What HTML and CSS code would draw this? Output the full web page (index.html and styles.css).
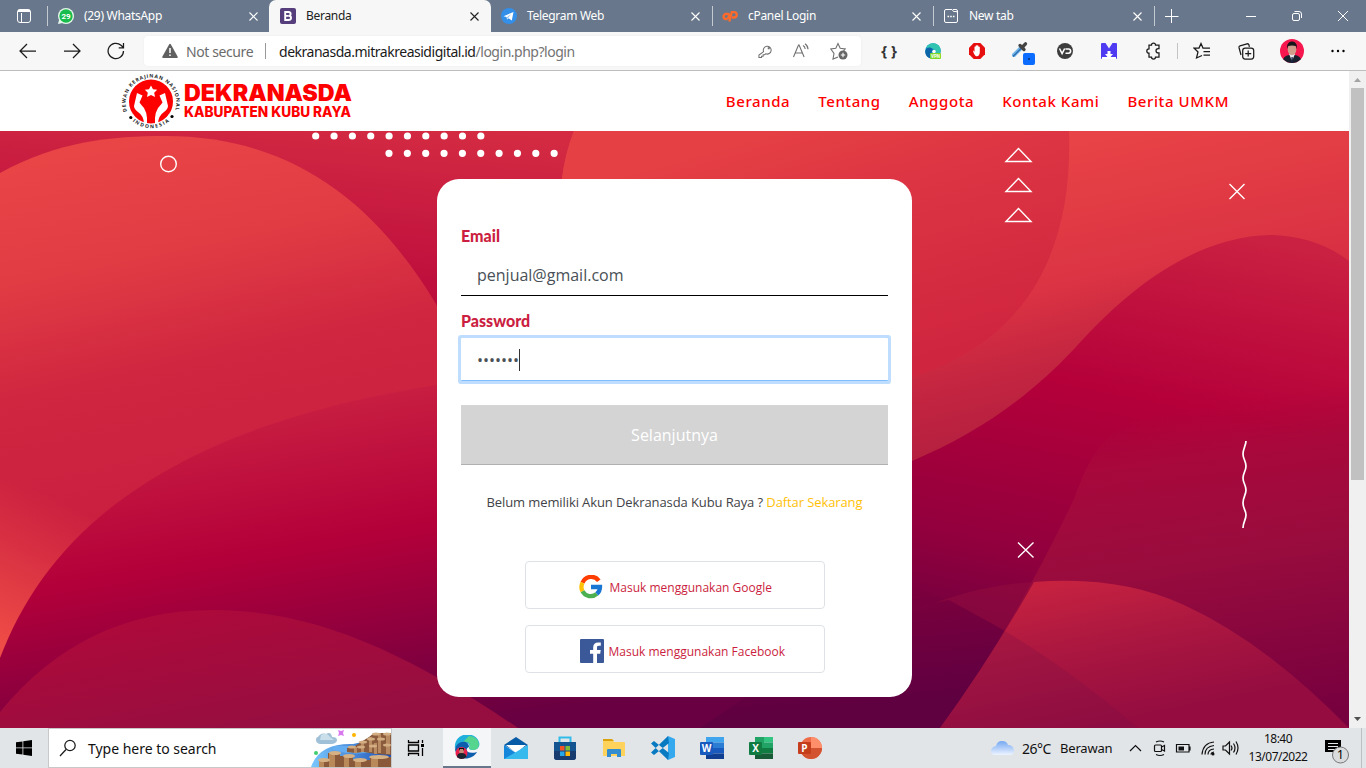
FILE: index.html
```html
<!DOCTYPE html>
<html lang="id">
<head>
<meta charset="utf-8">
<title>Beranda</title>
<link rel="stylesheet" href="styles.css">
</head>
<body>
<div class="screen">
  <header class="tabs">
    <div class="tab-menu"><svg width="16" height="16" viewBox="0 0 16 16" fill="none" stroke="#fff"><rect x="1.5" y="1.5" width="13" height="13" rx="2.5"/><path d="M2 3.5h12M5.5 5v9" /><path d="M2 2.7h12" stroke-width="2"/></svg></div>
    <div class="tab"><svg class="fav" viewBox="0 0 16 16"><circle cx="8" cy="8" r="8" fill="#e8f8ec"/><path d="M0 16l1.200-4.500L4.500 15z" fill="#e8f8ec"/><circle cx="8" cy="8" r="6.700" fill="#19bd4d"/><text class="badge-num" x="8" y="10.700" text-anchor="middle" fill="#fff">29</text></svg><span class="title">(29) WhatsApp</span><svg class="x" viewBox="0 0 9 9"><path d="M.5.5l8 8m0-8l-8 8"/></svg></div>
    <div class="tab active"><svg class="fav" viewBox="0 0 16 16"><rect width="16" height="16" rx="2" fill="#563d7c"/><path d="M5.200 4h3.300c2.800 0 2.800 3.700.2 3.800 3.200.2 3.100 4.200-.2 4.200H5.200zM5.200 7.900h3.300" fill="none" stroke="#fff" stroke-width="1.900"/></svg><span class="title">Beranda</span><svg class="x" viewBox="0 0 9 9"><path d="M.5.5l8 8m0-8l-8 8"/></svg></div>
    <div class="tab"><svg class="fav" viewBox="0 0 16 16"><circle cx="8" cy="8" r="8" fill="#338fe8"/><path d="M2.500 8.200L12.500 4l-1.700 8.500-3.200-2.300-1.500 1.400-.6-2.500z" fill="#fff"/><path d="M5.800 9.200l4.500-3.300-3 3.900-.9 1.100" fill="#9bc9f4"/></svg><span class="title">Telegram Web</span><svg class="x" viewBox="0 0 9 9"><path d="M.5.5l8 8m0-8l-8 8"/></svg></div>
    <div class="tab line"><svg class="fav" viewBox="0 0 16 16" fill="none" stroke="#ff6a2b" stroke-width="2.300"><path d="M7.500 6H4a2.500 2.500 0 000 5h1.500M7.300 13.500L9.800 4.200h2.400c3.800 0 3.200 5.300-.4 5.300H10M7.500 6L6 11"/></svg><span class="title">cPanel Login</span><svg class="x" viewBox="0 0 9 9"><path d="M.5.5l8 8m0-8l-8 8"/></svg></div>
    <div class="tab line"><svg class="fav" viewBox="0 0 16 16" fill="none" stroke="#fff"><path d="M3 1.500h6l1.500 2H13a1.500 1.500 0 011.500 1.500v8a1.500 1.500 0 01-1.500 1.500H3A1.500 1.500 0 011.500 13V3A1.500 1.500 0 013 1.500zM10 1.500h3a1.500 1.500 0 011.500 1.500v2"/><path d="M4.500 8.500h1.600m1.100 0h1.600m1.100 0h1.600" stroke-width="1.500"/></svg><span class="title">New tab</span><svg class="x" viewBox="0 0 9 9"><path d="M.5.5l8 8m0-8l-8 8"/></svg></div>
    <div class="new line"><svg width="14" height="14" viewBox="0 0 14 14" stroke="#fff"><path d="M6.500 0v14M0 7.500h13.500"/></svg></div>
    <div class="win"><svg width="112" height="12" viewBox="0 0 112 12" fill="none" stroke="#fff"><path d="M9 6.500h10M101 1l10 10m0-10l-10 10"/><rect x="55.500" y="3.500" width="7" height="7" rx="1.500"/><path d="M57.500 1.500h4.500a2.500 2.500 0 012.500 2.500v4"/></svg></div>
  </header>

  <div class="toolbar">
    <div class="cell"><svg width="18" height="16" viewBox="0 0 18 16" class="ink"><path d="M17 8H1.500M8 1L1 8l7 7"/></svg></div>
    <div class="cell"><svg width="18" height="16" viewBox="0 0 18 16" class="ink"><path d="M1 8h15.500M10 1l7 7-7 7"/></svg></div>
    <div class="cell"><svg width="18" height="18" viewBox="0 0 18 18" class="ink"><path d="M16.500 9A7.700 7.700 0 1114 3.300L16.500 5.500M16.500 1v4.800h-4.800"/></svg></div>
    <div class="address">
      <svg width="16" height="16" viewBox="0 0 16 16"><path d="M7.200 1.300q.8-1.300 1.600 0L15.700 13.700q.4 1.300-.9 1.300H1.200Q-.1 15 .3 13.700z" fill="#606060"/><path d="M8 5v5M8 11.500V13" stroke="#fff" stroke-width="1.500"/></svg>
      <span class="unsafe">Not secure</span><i class="bar"></i>
      <span class="url">dekranasda.mitrakreasidigital.id<em>/login.php?login</em></span>
      <div class="addr-icons">
        <svg width="14" height="14" viewBox="0 0 15 15"><path d="M6 8.200a4.200 4.200 0 112.300 2.300L7 11.500H5.500v1.600H3.800v1.400H1v-2.600zM11 4h1v1h-1z"/></svg>
        <svg width="18" height="16" viewBox="0 0 18 16"><path d="M1.500 14L6.500 2h.6l5 12M3.500 10h6.700M11 2.500q2 1 2.200 3.500M13 .8q3 2 3 5.500"/></svg>
        <svg width="18" height="18" viewBox="0 0 18 18"><path d="M8 15l-5 2 1-5.500L.8 7l5-.8L8 1.500l2.200 4.700 5 .8-1.700 1.800"/><circle cx="13" cy="13" r="4.500" fill="#666" stroke="none"/><path d="M13 10.800v4.400M10.800 13h4.400" stroke="#fff"/></svg>
      </div>
    </div>
    <div class="ext">
      <div class="cell braces">{ }</div>
      <div class="cell"><svg width="16" height="16" viewBox="0 0 16 16"><circle cx="8" cy="8" r="7.800" fill="#1593c9"/><path d="M1 5C4-2 15-1 15.700 7c0 5-6 4-5.200 2 .4-2-3.500-5-9.500-4z" fill="#31c4b1"/><path d="M.3 8C2 3 8 4 8 8c-3 0-2 5 2 7C4 17 0 13 .3 8z" fill="#0c65a8"/><circle cx="9" cy="8.500" r="1.800" fill="#fff"/><rect x="5" y="10" width="11" height="6" rx="1" fill="#7cd727"/><text class="vpn" x="10.500" y="14.800" text-anchor="middle">VPN</text></svg></div>
      <div class="cell"><svg width="16" height="16" viewBox="0 0 16 16"><path d="M4.700 0h6.600L16 4.700v6.600L11.300 16H4.700L0 11.300V4.700z" fill="#e60e0e"/><path d="M4 7.500c1 .3 1.500 1.500 1.500 1.500V3.800h1V2.800h1V2h1v.8h1v1h1.300v5c0 2.700-1 4.500-3 4.500S4.500 10 4 7.500z" fill="#fff"/></svg></div>
      <div class="cell"><svg class="picker" width="24" height="24" viewBox="0 0 24 24"><path d="M5 16l7.500-7.500" stroke="#6fb3e8" stroke-width="4" stroke-linecap="round"/><path d="M4 17.500L13 8.500" stroke="#2867a9" stroke-width="1.200"/><path d="M11 6.500l4 4M13.500 8l3-3.200" stroke="#444" stroke-width="3.300" stroke-linecap="round"/><rect x="14" y="14" width="12" height="12" rx="2" fill="#0b6cff"/><path d="M19 20h2" stroke="#012"/></svg></div>
      <div class="cell"><svg width="16" height="16" viewBox="0 0 16 16"><circle cx="8" cy="8" r="8" fill="#3d3d3d"/><path d="M2.500 5.500l2.600 5 2.600-5M8.500 6h3a2.100 2.100 0 010 4.200h-3" fill="none" stroke="#fff" stroke-width="1.600"/></svg></div>
      <div class="cell"><svg width="16" height="16" viewBox="0 0 16 16"><path d="M0 1q0-1 1-1h3.500L8 5.500 11.500 0H15q1 0 1 1v14q0 1-1 1H1q-1 0-1-1z" fill="#4f3cf2"/><path d="M6.500 8h3v3H12l-2.500 3H15v2H1v-2h5.500L4 11h2.500z" fill="#fff"/></svg></div>
      <div class="cell"><svg width="18" height="18" viewBox="0 0 18 18" class="ink"><path d="M5 3h2.500a2 2 0 014 0H15v3.500h-.8a2.200 2.200 0 000 4.400h.8V15h-3.500a2 2 0 01-4 0H5v-3.800a2.200 2.200 0 010-4.400z"/></svg></div>
      <i class="divider"></i>
      <div class="cell"><svg width="18" height="18" viewBox="0 0 18 18" class="ink"><path d="M9 13.500L3.500 16 5 10 1 6h5l2-4.500L10 6h7M10.500 9.500H17M10.500 13H17"/></svg></div>
      <div class="cell"><svg width="18" height="18" viewBox="0 0 18 18" class="ink"><path d="M4 13L2 5.500q-.3-1.300 1-1.700l7-2q1.500-.3 1.900 1l.5 2"/><rect x="5.700" y="6" width="11" height="11" rx="2.500"/><path d="M11.200 8.500v6M8.200 11.500h6"/></svg></div>
      <div class="cell avatar"><svg width="24" height="24" viewBox="0 0 24 24"><defs><clipPath id="av"><circle cx="12" cy="12" r="12"/></clipPath></defs><g clip-path="url(#av)"><path d="M0 0h24v24H0z" fill="#f5174d"/><path d="M2 24q1-7.500 7-8h6q6 .5 7 8z" fill="#17202c"/><path d="M9 15l3 7 3-7z" fill="#e8e8ee"/><path d="M11.500 18h1.200l.4 6h-2z" fill="#172140"/><ellipse cx="12" cy="10.500" rx="4.300" ry="5.800" fill="#cf9d8c"/><path d="M7.300 10C5 0 19 0 16.700 10L16 7q-4-1-8 0z" fill="#15151a"/></g></svg></div>
      <div class="cell more"><svg width="14" height="4" viewBox="0 0 14 4"><circle cx="1.500" cy="2" r="1.200"/><circle cx="7" cy="2" r="1.200"/><circle cx="12.500" cy="2" r="1.200"/></svg></div>
    </div>
  </div>

  <div class="viewport">
    <main class="site">
      <nav class="nav">
        <svg class="logo" width="236" height="60" viewBox="118 71 236 60">
          <defs><path id="ring-top" d="M127.500 112.300A25.300 25.300 0 11174.500 112.300"/><path id="ring-low" d="M129 117.500A28 28 0 00173 117.500"/></defs>
          <circle cx="151" cy="101.500" r="22" fill="#f00"/>
          <path d="M151 85.500l2 3.700 4.200.5-3 3 .8 4.300-4-2-4 2 .8-4.300-3-3 4.200-.5z" fill="#fff"/>
          <path d="M137 93l-3 13q0 3 4 6 6 4 6 12l3 .5q1-14-6-20l-1.500-2 3-7zM165 93l3 13q0 3-4 6-6 4-6 12l-3 .5q-1-14 6-20l1.500-2-3-7z" fill="#fff"/>
          <path d="M132 112q5 11 14 12.500l-1 2Q135 124 132 112zM170 112q-5 11-14 12.500l1 2Q167 124 170 112z" fill="#fff"/>
          <text class="ring"><textPath href="#ring-top" startOffset="1" textLength="95">DEWAN KERAJINAN NASIONAL</textPath></text>
          <text class="ring"><textPath href="#ring-low" startOffset="5" textLength="40">INDONESIA</textPath></text>
          <circle cx="130.800" cy="117.500" r="1.600"/><circle cx="172" cy="116.500" r="1.600"/>
          <text class="brand" x="184" y="101" textLength="168" lengthAdjust="spacingAndGlyphs">DEKRANASDA</text>
          <text class="brand-sub" x="184" y="117" textLength="167" lengthAdjust="spacingAndGlyphs">KABUPATEN KUBU RAYA</text>
        </svg>
        <div class="links"><a>Beranda</a><a>Tentang</a><a>Anggota</a><a>Kontak Kami</a><a>Berita UMKM</a></div>
      </nav>
      <section class="hero">
        <svg class="waves" viewBox="0 131 1349 597" preserveAspectRatio="none">
          <defs>
            <linearGradient id="base" gradientUnits="userSpaceOnUse" x1="500" y1="131" x2="480" y2="330"><stop offset="0" stop-color="#d42b42"/><stop offset=".45" stop-color="#c81b40"/><stop offset="1" stop-color="#b8083a"/></linearGradient>
            <linearGradient id="disc" gradientUnits="userSpaceOnUse" x1="150" y1="136" x2="230" y2="510"><stop offset="0" stop-color="#e94446"/><stop offset=".3" stop-color="#e13c44"/><stop offset=".6" stop-color="#d02640"/><stop offset="1" stop-color="#ca1e40"/></linearGradient>
            <linearGradient id="glow" gradientUnits="userSpaceOnUse" x1="60" y1="500" x2="-5" y2="640"><stop offset="0" stop-color="#ee4c46" stop-opacity="0"/><stop offset="1" stop-color="#ee4c46"/></linearGradient>
            <linearGradient id="wave" gradientUnits="userSpaceOnUse" x1="436" y1="385" x2="491" y2="720"><stop offset="0" stop-color="#c81e41"/><stop offset=".4" stop-color="#b4003a"/><stop offset=".85" stop-color="#7a003f"/><stop offset="1" stop-color="#690041"/></linearGradient>
            <linearGradient id="mound" gradientUnits="userSpaceOnUse" x1="200" y1="610" x2="225" y2="740"><stop offset="0" stop-color="#ac0a3b"/><stop offset="1" stop-color="#960e40"/></linearGradient>
            <linearGradient id="right" gradientUnits="userSpaceOnUse" x1="1130" y1="131" x2="1190" y2="420"><stop offset="0" stop-color="#e84346"/><stop offset="1" stop-color="#cc2140"/></linearGradient>
            <linearGradient id="orb" gradientUnits="userSpaceOnUse" x1="780" y1="131" x2="850" y2="380"><stop offset="0" stop-color="#e54044"/><stop offset=".3" stop-color="#dd3543"/><stop offset="1" stop-color="#d0253f"/></linearGradient>
            <linearGradient id="rose" gradientUnits="userSpaceOnUse" x1="965" y1="310" x2="1000" y2="455"><stop offset="0" stop-color="#b3203f" stop-opacity="0"/><stop offset="1" stop-color="#b3203f"/></linearGradient>
            <linearGradient id="crest" gradientUnits="userSpaceOnUse" x1="1180" y1="225" x2="1090" y2="680"><stop offset="0" stop-color="#ca2041"/><stop offset=".38" stop-color="#b5003a"/><stop offset=".75" stop-color="#92003d"/><stop offset="1" stop-color="#6b0040"/></linearGradient>
            <linearGradient id="sheet" gradientUnits="userSpaceOnUse" x1="1180" y1="410" x2="1230" y2="728"><stop offset="0" stop-color="#ab083b" stop-opacity="0"/><stop offset=".15" stop-color="#a8093c" stop-opacity=".9"/><stop offset=".45" stop-color="#9a0c3d"/><stop offset="1" stop-color="#77003f"/></linearGradient>
            <linearGradient id="hill" gradientUnits="userSpaceOnUse" x1="1070" y1="580" x2="1100" y2="728"><stop offset="0" stop-color="#c62240"/><stop offset=".45" stop-color="#ab1740"/><stop offset="1" stop-color="#940c40"/></linearGradient>
            <linearGradient id="purple" gradientUnits="userSpaceOnUse" x1="920" y1="580" x2="930" y2="700"><stop offset="0" stop-color="#7e003d"/><stop offset="1" stop-color="#5f0041"/></linearGradient>
            <clipPath id="hill-area"><path d="M940 728Q987 663 1034 582Q1175 563 1349 727V728z"/></clipPath>
          </defs>
          <path fill="url(#base)" d="M0 131h1349v597H0z"/>
          <path fill="url(#disc)" d="M0 173C58 141 112 136 165 136C290 136 374 201 436 304Q480 390 470 470L0 728z"/>
          <path fill="url(#glow)" d="M0 400H240V480L0 728z"/>
          <path fill="url(#wave)" d="M0 658C48 532 165 428 436 385L912 330V728H0z"/>
          <path fill="url(#mound)" d="M0 712Q83 610 213 610C315 610 407 653 518 728H0z"/>
          <path fill="url(#right)" d="M574 131H1349V470H912Q530 450 562 179Q565 154 574 131z"/>
          <path fill="url(#rose)" d="M912 250H1250V470H912z"/>
          <path fill="url(#orb)" d="M574 131H1069C1073 250 1028 341 912 377Q540 395 562 179Q565 154 574 131z"/>
          <path fill="url(#crest)" d="M912 461C975 434 1025 401 1075 348C1105 315 1180 235 1273 235Q1318 237 1349 261V728H912z"/>
          <path fill="url(#purple)" d="M700 728L912 585Q1020 627 1138 728z"/>
          <path fill="#94103d" opacity=".45" d="M912 612Q974 585 1034 582L1005 631L949 600Q930 603 912 612z"/>
          <path fill="url(#sheet)" d="M940 728Q1005 643 1075 497C1103 420 1125 402 1349 385V728z"/>
          <path fill="url(#hill)" d="M940 728Q991 658 1034 582Q1120 575 1184 605Q1265 642 1349 728z"/>
          <path clip-path="url(#hill-area)" fill="#7c0d43" opacity=".28" d="M912 585Q1020 627 1138 728H912z"/>
          <g fill="none" stroke="#fff" stroke-width="1.400"><circle cx="168.500" cy="164" r="7.800"/><path d="M1006 161.500L1018.500 148.500L1031 161.500zM1006 191.500L1018.500 178.500L1031 191.500zM1006 221.500L1018.500 208.500L1031 221.500zM1229.500 184l15 15m0-15l-15 15M1018 542.500l15.500 15m0-15l-15.500 15"/><path d="M1246 441c0 4-3 8-3 13s3 7 3 12-3 7-3 12 3 7 3 12-3 7-3 13 3 7 3 12-3 7-3 13" stroke-width="1.700"/></g>
          <path d="M315.700 136H490" stroke="#fff" stroke-width="7.200" stroke-linecap="round" stroke-dasharray="0 18.350"/>
          <path d="M389 153.300H562" stroke="#fff" stroke-width="7.200" stroke-linecap="round" stroke-dasharray="0 18.350"/>
        </svg>
        <form class="card">
          <label>Email</label>
          <div class="field email">penjual@gmail.com</div>
          <label>Password</label>
          <div class="field pass"><span>•••••••</span><i></i></div>
          <div class="submit">Selanjutnya</div>
          <p class="register">Belum memiliki Akun Dekranasda Kubu Raya ? <a>Daftar Sekarang</a></p>
          <div class="social"><svg width="24" height="24" viewBox="0 0 24 24" fill="none" stroke-width="4.300"><path d="M19.800 5.800A9.300 9.300 0 003.500 7.800" stroke="#ff3d00"/><path d="M3.500 7.800a9.300 9.300 0 000 8.500" stroke="#ffc107"/><path d="M3.500 16.300a9.300 9.300 0 0014.300 2.600" stroke="#4caf50"/><path d="M17.800 18.900A9 9 0 0021 12H12" stroke="#1976d2"/></svg><span>Masuk menggunakan Google</span></div>
          <div class="social facebook"><svg width="24" height="24" viewBox="0 0 24 24"><rect width="24" height="24" rx="1" fill="#3b5998"/><path d="M13.200 24v-9.300H10V11h3.200V8.300c0-3.200 2-4.900 4.800-4.900 1.400 0 2.500.1 2.800.2v3.200h-2c-1.500 0-1.800.8-1.800 1.800V11h3.700l-.5 3.700H17V24z" fill="#fff"/></svg><span>Masuk menggunakan Facebook</span></div>
        </form>
      </section>
    </main>
    <aside class="scroll"><svg width="7" height="4"><path d="M0 4L3.500 0 7 4z" fill="#a3a3a3"/></svg><i></i><svg width="7" height="4"><path d="M0 0l3.500 4L7 0z" fill="#505050"/></svg></aside>
  </div>

  <footer class="taskbar">
    <div class="start"><svg width="16" height="16" viewBox="0 0 16 16"><path d="M0 2.300L6.500 1.400v6.100H0zM7.300 1.300L16 0v7.500H7.300zM0 8.300h6.500v6.200L0 13.700zM7.300 8.300H16V16l-8.700-1.300z"/></svg></div>
    <div class="search">
      <svg width="18" height="18" viewBox="0 0 18 18" class="ink"><circle cx="11" cy="6.500" r="5.200"/><path d="M7 10.500L1 17"/></svg><span>Type here to search</span>
      <svg class="art" width="80" height="38" viewBox="0 0 80 38">
        <defs><linearGradient id="sea"><stop stop-color="#7ac8ff"/><stop offset="1" stop-color="#1d51b6"/></linearGradient></defs>
        <path d="M0 38Q8 14 42 15L80 7v31z" fill="url(#sea)"/><path d="M22 17Q60 18 80 10v6Q54 30 22 21z" fill="#64adf0"/>
        <path d="M7 8q3-5 8-3 5-3 6 3 5 0 5 3t-5 4H9q-4-1-4-4t2-3z" fill="#9fc0d7"/><path d="M10 6q5-4 9 2l4 3H9z" fill="#c9dfea"/>
        <path d="M27 1l3 1 3-1-1 3 1 3-3-1-3 1 1-3z" fill="#d977ee"/><circle cx="43" cy="6" r="2" fill="#ffb400"/><circle cx="5" cy="24" r="2" fill="#42ce70"/>
        <g fill="#8a5b3c"><path d="M36 19v4l8 1 8-1 14 2 14 1V4l-17 0-5 4-8 5-6 4z"/></g>
        <g fill="#b98b62"><path d="M50 13v10h3V13zM58 8v15h3V8zM67 4v20h3V4zM75 6v19h4V6zM43 18v6h3v-6zM63 14v11h3V14z"/></g>
        <g fill="#d3ae82"><ellipse cx="65" cy="5" rx="4" ry="1.500"/><ellipse cx="76" cy="5" rx="4" ry="1.500"/><ellipse cx="60" cy="10" rx="4" ry="1.500"/><ellipse cx="70" cy="10" rx="4" ry="1.500"/><ellipse cx="52" cy="13" rx="4" ry="1.500"/><ellipse cx="76" cy="16" rx="4" ry="1.500"/><ellipse cx="41" cy="18" rx="4" ry="1.500"/><ellipse cx="50" cy="18" rx="4" ry="1.500"/><ellipse cx="62" cy="17" rx="4" ry="1.500"/></g>
        <path d="M8 32h9v-8h12v3h13v4h17v-3h21v10H8z" fill="#89593a"/><path d="M8 32h5v6H8zM18 24h6v14h-6zM33 28h5v10h-5zM44 32h6v6h-6zM60 29h7v9h-7z" fill="#ba8959"/>
        <g fill="#d6b184"><ellipse cx="13" cy="31" rx="6" ry="2"/><ellipse cx="24" cy="24" rx="6" ry="2"/><ellipse cx="38" cy="27" rx="6" ry="2"/><ellipse cx="49" cy="31" rx="7" ry="2"/><ellipse cx="68" cy="28" rx="10" ry="2"/></g>
      </svg>
    </div>
    <div class="apps">
      <div class="view"><svg width="18" height="16" viewBox="0 0 18 16" fill="none" stroke="#000" stroke-width="1.300"><path d="M1.500 0v2.500h10V0M1.500 5h10v6h-10zM1.500 16v-2.500h10V16M15.500 0v3M15.500 8v8"/><path d="M14 5.500h3" stroke-width="3"/></svg></div>
      <div class="on"><svg width="26" height="24" viewBox="0 0 26 24"><path d="M1 14C-1-3 21-5 25 7c2 6-4 10-10 7 3-7-7-10-14 0z" fill="#21b0db"/><path d="M15 1c11 0 13 13 5 14-5 0-6-2-4-4q0-5-7-4z" fill="#55d58d"/><path d="M1 15C2 5 15 4 15 12c-5 2-2 8 8 5-4 7-14 9-20 3z" fill="#0d5eac"/><circle cx="7.500" cy="18" r="6" fill="#e91f4d"/><circle cx="7.500" cy="16" r="2.500" fill="#c38a78"/><path d="M3 22q0-4 4.500-4t5 4q-5 4-9.500 0z" fill="#1a2430"/><path d="M5 16v-3h5v3l-1-2H6z" fill="#111"/></svg></div>
      <div><svg width="24" height="24" viewBox="0 0 24 24"><path d="M0 9L12 1l12 8-12 7z" fill="#075ba6"/><path d="M2 9h20l-10 8z" fill="#fff"/><path d="M0 9l12 8-10 6H0z" fill="#1686da"/><path d="M24 9v14H0l12-7z" fill="#36b9ed"/></svg></div>
      <div><svg width="24" height="24" viewBox="0 0 24 24"><path d="M6.500 7V1.500h11V7" fill="none" stroke="#32bce9" stroke-width="2"/><path d="M1 6h22v15q0 3-3 3H4q-3 0-3-3z" fill="#145491"/><path d="M1 15h22v6q0 3-3 3H4q-3 0-3-3z" fill="#183b70"/><path d="M7 10h4.500v4.500H7z" fill="#f35325"/><path d="M12.500 10H17v4.500h-4.500z" fill="#81bc36"/><path d="M7 15.500h4.500V20H7z" fill="#25a7eb"/><path d="M12.500 15.500H17V20h-4.500z" fill="#ffba08"/></svg></div>
      <div><svg width="22" height="20" viewBox="0 0 22 20"><path d="M0 2q0-1 1-1h8l2 3h10q1 0 1 1v13H0z" fill="#ffd35b"/><path d="M0 1h9l2 2H0z" fill="#dca20d"/><path d="M4 19v-7q0-1 1-1h12q1 0 1 1v7h-4v-3H8v3z" fill="#338dcf"/></svg></div>
      <div><svg width="24" height="24" viewBox="0 0 24 24"><path d="M17 0l7 3v18l-7 3z" fill="#35a9ed"/><path d="M18 7L3 19l-3-2.500L17 0zM18 17L3 5 0 7.500 17 24z" fill="#087ac2"/></svg></div>
      <div><svg width="24" height="22" viewBox="0 0 24 22"><path d="M6 0h18v5.500H6z" fill="#41a5ee"/><path d="M6 5.500h18V11H6z" fill="#2b7cd3"/><path d="M6 11h18v5.500H6z" fill="#185abd"/><path d="M6 16.500h18V22H6z" fill="#103f91"/><rect y="5" width="13" height="13" rx="1" fill="#185abd"/><text class="app-letter" x="6.500" y="15">W</text></svg></div>
      <div><svg width="24" height="22" viewBox="0 0 24 22"><path d="M6 0h9v11H6z" fill="#21a366"/><path d="M15 0h9v5.500h-9z" fill="#33c481"/><path d="M15 5.500h9V11h-9z" fill="#21a366"/><path d="M6 11h18v5.500H6z" fill="#107c41"/><path d="M6 16.500h18V22H6z" fill="#185c37"/><rect y="5" width="13" height="13" rx="1" fill="#107c41"/><text class="app-letter" x="6.500" y="15">X</text></svg></div>
      <div><svg width="24" height="22" viewBox="0 0 24 22"><circle cx="13" cy="11" r="11" fill="#ed6c47"/><path d="M13 0a11 11 0 0111 11H13z" fill="#ff8f6b"/><path d="M2 11h22a11 11 0 01-22 0z" fill="#d35230"/><rect y="5" width="13" height="12" rx="1" fill="#c43e1c"/><text class="app-letter" x="6.500" y="15">P</text></svg></div>
    </div>
    <div class="tray">
      <svg width="23" height="15" viewBox="0 0 23 15"><defs><linearGradient id="cl" x2="0" y2="1"><stop stop-color="#75a8f2"/><stop offset="1" stop-color="#edf4ff"/></linearGradient></defs><path d="M5 5q1-5 6-5t6 4q5 0 6 5t-5 5H4q-4 0-4-4t5-5z" fill="url(#cl)"/></svg>
      <span class="temp">26°C</span><span class="weather">Berawan</span>
      <svg class="status" width="108" height="18" viewBox="0 0 108 18" fill="none" stroke="#111" stroke-width="1.200">
        <path d="M1 12l5.500-5.500L12 12"/><rect x="25.500" y="6" width="7" height="6.500" rx="1"/><path d="M32.500 8l3-1.500v5.500l-3-1.500M27 3q4-2 8 0M27 15.500q4 2 8 0"/><path d="M47.500 5.500h12.500v7.500H47.500zM61 7.500v4"/><path d="M49.500 7.500h5.500v4h-5.500z" fill="#111" stroke="none"/><path d="M73 15.500Q74 4 85 3M76 15.500q0-8 9-9M79 15.500q0-5 6-5.500M82 15.500q0-2 3-2.500"/><circle cx="84" cy="15" r="1.500" fill="#111" stroke="none"/><path d="M94 7h2.500l4-4v12l-4-4H94zM102 6.500q2 2.500 0 5M104.500 4.500q3 4.500 0 9M107 2.500q4 6.500 0 13"/>
      </svg>
      <div class="clock"><span>18:40</span><span>13/07/2022</span></div>
      <svg class="notice" width="26" height="26" viewBox="0 0 26 26"><path d="M0 1h16v12h-4v4l-4-4H0z"/><path d="M3 4.500h10M3 7.500h10M3 10.500h7" stroke="#e4e7ea"/><circle cx="15.500" cy="16" r="8" fill="#d9dbdd" stroke="#777"/><text class="note" x="15.500" y="20" text-anchor="middle">1</text></svg>
    </div>
  </footer>
</div>
</body>
</html>
```
FILE: styles.css
```css
* { box-sizing: border-box; }
body { margin: 0; overflow: hidden; font-family: "Open Sans", sans-serif; }
svg { display: block; flex: none; }
.screen { width: 1366px; height: 768px; display: flex; flex-direction: column; }

/* tab strip */
.tabs { height: 32px; display: flex; background: #68778b; color: #fff; flex: none; }
.tab-menu { width: 47px; display: grid; place-items: center; }
.tab { width: 221px; height: 32px; display: flex; align-items: center; padding: 0 12px 0 10px; }
.tab:nth-child(2) { width: 222px; padding-left: 11px; padding-right: 11px; }
.tab.active { width: 222px; background: #f7f7f7; color: #222; border-radius: 7px 7px 0 0; padding-left: 11px; }
.tab:nth-child(2), .line { background: linear-gradient(#c4cad2, #c4cad2) 0 50% / 1px 20px no-repeat; }
.fav { width: 16px; height: 16px; margin-right: 10px; overflow: visible; }
.title { flex: 1; white-space: nowrap; font: 12px "Noto Sans", sans-serif; letter-spacing: -.3px; padding-bottom: 1px; }
.x { width: 9px; height: 9px; stroke: #fff; stroke-width: 1.1; fill: none; }
.active .x { stroke: #222; }
.badge-num { font: bold 8px Roboto, sans-serif; }
.new { width: 36px; padding-left: 11px; display: flex; align-items: center; }
.win { margin-left: auto; padding-right: 17px; display: flex; align-items: center; }

/* address row */
.toolbar { height: 39px; display: flex; align-items: center; padding-left: 6px; background: #f7f7f7; border-bottom: 1px solid #bdbdbd; flex: none; }
.cell { width: 44px; display: grid; place-items: center; }
.ink { fill: none; stroke: #1b1b1b; stroke-width: 1.25; }
.address { width: 717px; height: 30px; margin-left: 6px; background: #fff; border-radius: 4px; display: flex; align-items: center; padding: 0 13px 0 18px; box-shadow: 0 0 2px #e8e8e8; font: 14px "Noto Sans", sans-serif; }
.unsafe { color: #6b6b6b; width: 79px; margin-left: 8px; white-space: nowrap; letter-spacing: -.4px; }
.bar { width: 1px; height: 16px; background: #999; }
.url { color: #1a1a1a; margin-left: 13px; letter-spacing: -.48px; }
.url em { color: #737373; font-style: normal; }
.addr-icons { margin-left: auto; display: flex; gap: 20px; align-items: center; fill: none; stroke: #707070; stroke-width: 1.1; }
.ext { display: flex; align-items: center; margin-left: 6px; }
.braces { font: bold 15px "Noto Sans", sans-serif; color: #333; padding-bottom: 2px; }
.vpn { font: bold 4.5px Roboto, sans-serif; fill: #fff; }
.picker { overflow: visible; }
.divider { width: 1px; height: 16px; margin: 0 2px; background: #c4c4c4; }
.avatar { padding-left: 3px; }
.more { width: 52px; }

/* website */
.viewport { height: 657px; display: flex; flex: none; }
.site { width: 1349px; }
.nav { height: 60px; background: #fff; display: flex; align-items: center; padding: 0 120px 0 118px; justify-content: space-between; }
.ring { font: bold 5px "Open Sans", sans-serif; fill: #222; }
.brand { font: 900 22.5px Inter, sans-serif; fill: #f00; }
.brand-sub { font: 800 14px Inter, sans-serif; fill: #f00; }
.links { display: flex; gap: 28px; color: #f00; font: 500 15px "Noto Sans", sans-serif; letter-spacing: .58px; }
.hero { height: 597px; display: grid; justify-items: center; position: relative; }
.waves { position: absolute; inset: 0; width: 1349px; height: 597px; }
.card { position: relative; width: 475px; height: 518px; margin-top: 48px; background: #fff; border-radius: 22px; padding: 44px 24px 0; display: flex; flex-direction: column; }
.card label { font: 900 16px/25px Lato, sans-serif; color: #cb1e40; }
.field { height: 43px; padding: 0 16px; display: flex; align-items: center; font-size: 16px; color: #495057; }
.email { height: 48px; border-bottom: 1px solid #000; margin-bottom: 12px; padding-top: 7px; }
.pass { border-bottom: 1px solid #80bdff; box-shadow: 0 0 0 3px #bfdeff; border-radius: 1px; margin-top: 5px; padding-top: 2px; }
.pass i { width: 1px; height: 22px; background: #333; }
.submit { height: 60px; background: #d4d4d4; border-bottom: 1px solid #b0b0b0; margin-top: 24px; display: grid; place-items: center; color: #fff; font-weight: 500; font-size: 16px; }
.register { margin: 27px 0 49px; text-align: center; font-size: 13px; line-height: 20px; letter-spacing: -.1px; color: #3f4347; white-space: nowrap; }
.register a { color: #ffc107; }
.social { width: 300px; height: 48px; align-self: center; border: 1px solid #dee2e6; border-radius: 4px; display: flex; align-items: center; padding: 4px 0 0 53px; color: #cb1e40; font-size: 12px; gap: 7px; }
.facebook { margin-top: 16px; padding-left: 54px; gap: 5px; }
.scroll { width: 17px; background: #f0f0f0; display: flex; flex-direction: column; align-items: center; padding: 7px 0; }
.scroll i { width: 13px; height: 392px; background: #c1c1c1; margin-top: 6px; margin-bottom: auto; }

/* taskbar */
.taskbar { height: 40px; display: flex; background: #e2e5e8; font: 14px "Noto Sans", sans-serif; color: #111; }
.start { width: 48px; display: grid; place-items: center; }
.search { width: 344px; background: #fff; border: 1px solid #c6c8ca; display: flex; align-items: center; padding-left: 10px; }
.search span { margin-left: 11px; letter-spacing: -.02px; }
.art { margin-left: auto; }
.apps { display: flex; }
.apps > div { width: 49px; display: grid; place-items: center; }
.apps > .view { width: 51px; padding-right: 3px; }
.apps > .on { width: 48px; background: #f5f6f7; border-bottom: 2px solid #68778b; }
.app-letter { font: bold 10px "Open Sans", sans-serif; fill: #fff; text-anchor: middle; }
.tray { width: 371px; margin-left: auto; margin-right: 4px; border-right: 1px solid #bdbfc2; display: flex; align-items: center; }
.temp { margin-left: 8px; width: 38px; letter-spacing: -.5px; white-space: nowrap; }
.weather { width: 69px; font-size: 13px; letter-spacing: -.2px; white-space: nowrap; }
.status { overflow: visible; }
.clock { width: 72px; margin-left: 5px; display: flex; flex-direction: column; align-items: center; font-size: 12px; line-height: 18px; letter-spacing: -.5px; }
.notice { margin: 7px 0 0 11px; }
.note { font: 12px "Noto Sans", sans-serif; }
```
